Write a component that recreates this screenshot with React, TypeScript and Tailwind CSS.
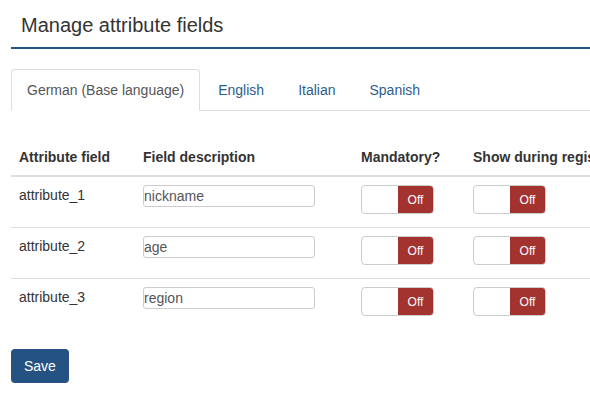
import React from "react";

const rows = [
  { field: "attribute_1", description: "nickname" },
  { field: "attribute_2", description: "age" },
  { field: "attribute_3", description: "region" },
];

const tabs = ["German (Base language)", "English", "Italian", "Spanish"];

function OffSwitch() {
  return (
    <div className="flex h-[29px] w-[73px] overflow-hidden rounded-[4px] border border-[#cccccc] bg-white">
      <div className="w-[36px]" />
      <div className="flex flex-1 items-center justify-center bg-[#a3332f] text-[12px] text-white">
        Off
      </div>
    </div>
  );
}

export default function App() {
  return (
    <div
      className="h-[408px] w-[590px] overflow-hidden bg-white text-[14px] text-[#333333]"
      style={{ fontFamily: '"Liberation Sans", Arial, sans-serif' }}
    >
      <div className="w-[760px] pl-[11px]">
        <div className="flex h-[49px] items-center border-b-2 border-[#245383] pl-[10px] pt-[3px] text-[20px] leading-[22px] text-[#333333]">
          Manage attribute fields
        </div>

        <ul className="mt-[20px] flex border-b border-[#dddddd]">
          {tabs.map((t, i) => (
            <li key={t} className="-mb-px mr-[2px]">
              <div
                className={
                  i === 0
                    ? "rounded-t-[4px] border border-[#dddddd] border-b-white bg-white px-[15px] py-[10px] leading-[20px] text-[#555555]"
                    : "rounded-t-[4px] border border-transparent px-[15px] py-[10px] leading-[20px] text-[#2d5d8f]"
                }
              >
                {t}
              </div>
            </li>
          ))}
        </ul>

        <div className="mt-[28px]">
          <div className="flex h-[38px] border-b-2 border-[#dddddd] font-bold leading-[20px]">
            <div className="w-[124px] shrink-0 p-[8px]">Attribute field</div>
            <div className="w-[218px] shrink-0 p-[8px]">Field description</div>
            <div className="w-[112px] shrink-0 p-[8px]">Mandatory?</div>
            <div className="shrink-0 whitespace-nowrap p-[8px]">Show during registration?</div>
          </div>
          {rows.map((r, i) => (
            <div
              key={r.field}
              className={
                i === 0
                  ? "flex h-[50px] leading-[20px]"
                  : "flex h-[51px] border-t border-[#dddddd] leading-[20px]"
              }
            >
              <div className="w-[124px] shrink-0 p-[8px]">{r.field}</div>
              <div className="w-[218px] shrink-0 p-[8px]">
                <input
                  readOnly
                  value={r.description}
                  className="block h-[22px] w-[172px] rounded-[3px] border border-[#cccccc] px-0 text-[14px] text-[#555555] outline-none"
                />
              </div>
              <div className="w-[112px] shrink-0 p-[8px]">
                <OffSwitch />
              </div>
              <div className="shrink-0 p-[8px]">
                <OffSwitch />
              </div>
            </div>
          ))}
        </div>

        <button className="mt-[20px] h-[34px] rounded-[4px] bg-[#245383] px-[13px] leading-[20px] text-white">
          Save
        </button>
      </div>
    </div>
  );
}
